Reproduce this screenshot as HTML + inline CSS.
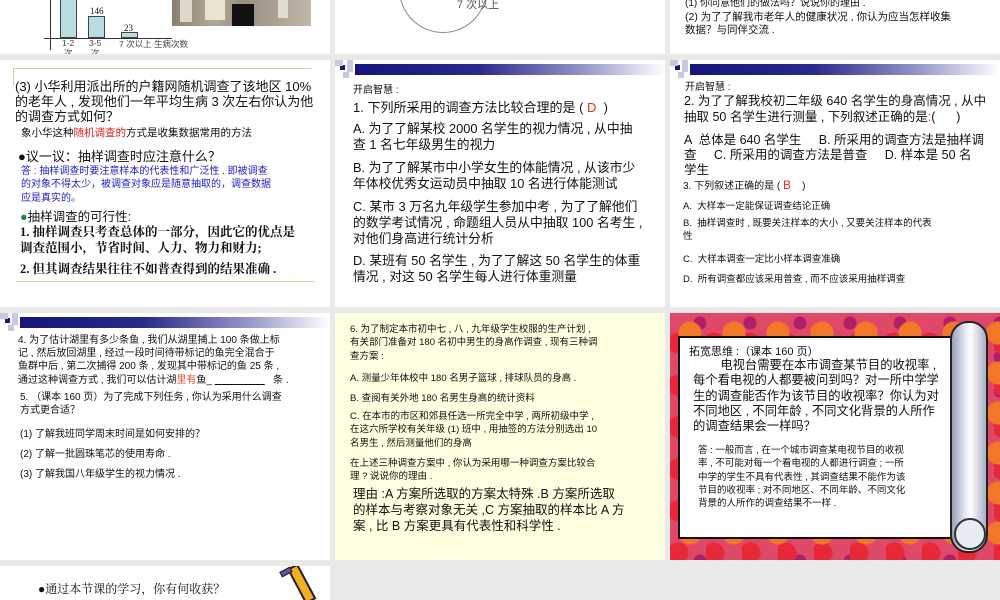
<!DOCTYPE html>
<html><head><meta charset="utf-8"><style>
*{margin:0;padding:0;box-sizing:border-box}
body{width:1000px;height:600px;background:#e9e9e9;position:relative;overflow:hidden;font-family:"Liberation Sans","Noto Sans CJK SC",sans-serif;color:#111}
.s{position:absolute;background:#fff;overflow:hidden}
.t{position:absolute;white-space:nowrap}
.bar{position:absolute;left:20px;right:0;height:11px;background:linear-gradient(90deg,#14147a 0%,#2a2a8a 40%,#9a9acc 75%,#fff 100%)}
.sq{position:absolute;background:#1a1a7a}
.sql{position:absolute;background:#c8c8e4}
.b{font-weight:bold}
</style></head><body>

<!-- top row -->
<div class="s" style="left:0;top:0;width:330px;height:54px">
  <div style="position:absolute;left:50px;top:0;width:1px;height:50px;background:#333"></div>
  <div style="position:absolute;left:44px;top:38px;width:128px;height:1px;background:#333"></div>
  <div style="position:absolute;left:60px;top:0;width:17px;height:38px;background:#b8dde0;border:1px solid #444;border-top:none"></div>
  <div style="position:absolute;left:88px;top:16px;width:17px;height:22px;background:#b8dde0;border:1px solid #444"></div>
  <div style="position:absolute;left:121px;top:32px;width:17px;height:6px;background:#b8dde0;border:1px solid #444"></div>
  <div class="t" style="left:90px;top:6px;font-size:9px;font-family:'Liberation Serif',serif">146</div>
  <div class="t" style="left:124px;top:23px;font-size:9px;font-family:'Liberation Serif',serif">23</div>
  <div class="t" style="left:62px;top:38px;font-size:8.5px;line-height:10px;text-align:center;color:#444">1-2<br>次</div>
  <div class="t" style="left:89px;top:38px;font-size:8.5px;line-height:10px;text-align:center;color:#444">3-5<br>次</div>
  <div class="t" style="left:119px;top:38px;font-size:8.5px;color:#444">7 次以上 生病次数</div>
  <div style="position:absolute;left:172px;top:0;width:139px;height:26px;background:linear-gradient(90deg,#8a8070,#b0a898 30%,#9a9080 50%,#a89e90 70%,#c0b8a8);"></div>
  <div style="position:absolute;left:232px;top:4px;width:22px;height:22px;background:#111"></div>
  <div style="position:absolute;left:205px;top:0;width:20px;height:20px;background:#e8e4d0"></div>
  <div style="position:absolute;left:180px;top:0;width:12px;height:22px;background:#ddd8c8"></div>
  <div style="position:absolute;left:278px;top:0;width:10px;height:18px;background:#e0dcd0"></div>
</div>
<div class="s" style="left:335px;top:0;width:330px;height:54px">
  <div style="position:absolute;left:64px;top:-55px;width:88px;height:88px;border:1px solid #888;border-radius:50%"></div>
  <div class="t" style="left:122px;top:-4px;font-size:11px;color:#555">7 次以上</div>
</div>
<div class="s" style="left:670px;top:0;width:330px;height:54px">
  <div class="t" style="left:15px;top:-6px;font-size:10px">(1) 你同意他们的做法吗？说说你的理由 .</div>
  <div class="t" style="left:15px;top:11px;font-size:10.5px;line-height:13px">(2) 为了了解我市老年人的健康状况 , 你认为应当怎样收集<br>数据？与同伴交流 .</div>
</div>

<!-- row 2 -->
<div class="s" style="left:0;top:60px;width:330px;height:247px">
  <div style="position:absolute;left:13px;top:8px;width:298px;height:1px;background:#d8cc9a"></div>
  <div style="position:absolute;left:13px;top:8px;width:1px;height:18px;background:#d8cc9a"></div>
  <div style="position:absolute;left:16px;top:221px;width:298px;height:1px;background:#d8cc9a"></div>
  <div class="t" style="left:15px;top:19px;font-size:13px;line-height:15px">(3) 小华利用派出所的户籍网随机调查了该地区 10%<br>的老年人 , 发现他们一年平均生病 3 次左右你认为他<br>的调查方式如何？</div>
  <div class="t" style="left:21px;top:65px;font-size:10.5px">象小华这种<span style="color:#e02020">随机调查的</span>方式是收集数据常用的方法</div>
  <div class="t" style="left:18px;top:86px;font-size:13px">●议一议：抽样调查时应注意什么？</div>
  <div class="t" style="left:21px;top:105px;font-size:10px;line-height:13.3px;color:#2020d0">答 : 抽样调查时要注意样本的代表性和广泛性 . 即被调查<br>的对象不得太少，被调查对象应是随意抽取的，调查数据<br>应是真实的。</div>
  <div class="t" style="left:20px;top:146px;font-size:12.5px"><span style="color:#208040">●</span>抽样调查的可行性:</div>
  <div class="t" style="left:20px;top:164px;font-size:12.5px;line-height:16px;font-family:'Liberation Serif','Noto Serif CJK SC',serif;font-weight:bold">1. 抽样调查只考查总体的一部分，因此它的优点是<br>调查范围小，节省时间、人力、物力和财力;</div>
  <div class="t" style="left:20px;top:199px;font-size:12.5px;font-family:'Liberation Serif','Noto Serif CJK SC',serif;font-weight:bold">2. 但其调查结果往往不如普查得到的结果准确 .</div>
</div>
<div class="s" style="left:335px;top:60px;width:330px;height:247px">
  <div class="bar" style="top:4px"></div>
  <div class="sq" style="left:5px;top:5px;width:5px;height:5px"></div>
  <div class="sql" style="left:0;top:0;width:8px;height:6px"></div><div class="sql" style="left:12px;top:0;width:6px;height:12px"></div><div class="sql" style="left:8px;top:12px;width:6px;height:6px"></div>
  <div class="t" style="left:18px;top:21px;font-size:10px">开启智慧 :</div>
  <div class="t" style="left:18px;top:37px;font-size:13px">1. 下列所采用的调查方法比较合理的是 ( <span style="color:#e83010">D</span> &nbsp;)</div>
  <div class="t" style="left:18px;top:61px;font-size:12.8px;line-height:16px">A. 为了了解某校 2000 名学生的视力情况 , 从中抽<br>查 1 名七年级男生的视力</div>
  <div class="t" style="left:18px;top:100px;font-size:12.8px;line-height:16px">B. 为了了解某市中小学女生的体能情况 , 从该市少<br>年体校优秀女运动员中抽取 10 名进行体能测试</div>
  <div class="t" style="left:18px;top:139px;font-size:12.8px;line-height:16px">C. 某市 3 万名九年级学生参加中考 , 为了了解他们<br>的数学考试情况 , 命题组人员从中抽取 100 名考生 ,<br>对他们身高进行统计分析</div>
  <div class="t" style="left:18px;top:193px;font-size:12.8px;line-height:16px">D. 某班有 50 名学生 , 为了了解这 50 名学生的体重<br>情况 , 对这 50 名学生每人进行体重测量</div>
</div>
<div class="s" style="left:670px;top:60px;width:330px;height:247px">
  <div class="bar" style="top:4px"></div>
  <div class="sq" style="left:5px;top:5px;width:5px;height:5px"></div>
  <div class="sql" style="left:0;top:0;width:8px;height:6px"></div><div class="sql" style="left:12px;top:0;width:6px;height:12px"></div><div class="sql" style="left:8px;top:12px;width:6px;height:6px"></div>
  <div class="t" style="left:15px;top:18px;font-size:10px">开启智慧 :</div>
  <div class="t" style="left:14px;top:34px;font-size:12.5px;line-height:15.5px">2. 为了了解我校初二年级 640 名学生的身高情况 , 从中<br>抽取 50 名学生进行测量 , 下列叙述正确的是<span style="color:#e83010">:</span>( &nbsp;&nbsp;&nbsp;&nbsp;&nbsp;)</div>
  <div class="t" style="left:14px;top:73px;font-size:12.5px;line-height:15px">A &nbsp;总体是 640 名学生 &nbsp;&nbsp;&nbsp;&nbsp;B. 所采用的调查方法是抽样调<br>查 &nbsp;&nbsp;&nbsp;&nbsp;C. 所采用的调查方法是普查 &nbsp;&nbsp;&nbsp;&nbsp;D. 样本是 50 名<br>学生</div>
  <div class="t" style="left:13px;top:117px;font-size:10px">3. 下列叙述正确的是 ( <span style="color:#e83010;font-size:12px">B</span> &nbsp;&nbsp;&nbsp;)</div>
  <div class="t" style="left:13px;top:138px;font-size:9.5px">A. &nbsp;大样本一定能保证调查结论正确</div>
  <div class="t" style="left:13px;top:157px;font-size:9.5px;line-height:13px">B. &nbsp;抽样调查时 , 既要关注样本的大小 , 又要关注样本的代表<br>性</div>
  <div class="t" style="left:13px;top:191px;font-size:9.5px">C. &nbsp;大样本调查一定比小样本调查准确</div>
  <div class="t" style="left:13px;top:211px;font-size:9.5px">D. &nbsp;所有调查都应该采用普查 , 而不应该采用抽样调查</div>
</div>

<!-- row 3 -->
<div class="s" style="left:0;top:313px;width:330px;height:247px">
  <div class="bar" style="top:4px"></div>
  <div class="sq" style="left:5px;top:5px;width:5px;height:5px"></div>
  <div class="sql" style="left:0;top:0;width:8px;height:6px"></div><div class="sql" style="left:12px;top:0;width:6px;height:12px"></div><div class="sql" style="left:8px;top:12px;width:6px;height:6px"></div>
  <div class="t" style="left:18px;top:21px;font-size:10px;line-height:13.2px">4. 为了估计湖里有多少条鱼 , 我们从湖里捕上 100 条做上标<br>记 , 然后放回湖里 , 经过一段时间待带标记的鱼完全混合于<br>鱼群中后 , 第二次捕得 200 条 , 发现其中带标记的鱼 25 条 ,<br>通过这种调查方式 , 我们可以估计湖<span style="color:#e05030">里有</span>鱼_ <u>&nbsp;&nbsp;&nbsp;&nbsp;&nbsp;&nbsp;&nbsp;&nbsp;&nbsp;&nbsp;&nbsp;&nbsp;&nbsp;&nbsp;&nbsp;&nbsp;&nbsp;&nbsp;</u> &nbsp;&nbsp;条 .</div>
  <div class="t" style="left:20px;top:78px;font-size:10px;line-height:13.3px">5. （课本 160 页）为了完成下列任务 , 你认为采用什么调查<br>方式更合适？</div>
  <div class="t" style="left:20px;top:112px;font-size:10px">(1) 了解我班同学周末时间是如何安排的？</div>
  <div class="t" style="left:20px;top:132px;font-size:10px">(2) 了解一批圆珠笔芯的使用寿命 .</div>
  <div class="t" style="left:20px;top:152px;font-size:10px">(3) 了解我国八年级学生的视力情况 .</div>
</div>
<div class="s" style="left:335px;top:313px;width:330px;height:247px;background:#fefee0">
  <div class="t" style="left:15px;top:10px;font-size:9.5px;line-height:13.3px">6. 为了制定本市初中七 , 八 , 九年级学生校服的生产计划 ,<br>有关部门准备对 180 名初中男生的身高作调查 , 现有三种调<br>查方案 :</div>
  <div class="t" style="left:15px;top:57px;font-size:9.5px">A. 测量少年体校中 180 名男子篮球 , 排球队员的身高 .</div>
  <div class="t" style="left:15px;top:77px;font-size:9.5px">B. 查阅有关外地 180 名男生身高的统计资料</div>
  <div class="t" style="left:15px;top:97px;font-size:9.5px;line-height:13.3px">C. 在本市的市区和郊县任选一所完全中学 , 两所初级中学 ,<br>在这六所学校有关年级 (1) 班中 , 用抽签的方法分别选出 10<br>名男生 , 然后测量他们的身高</div>
  <div class="t" style="left:15px;top:144px;font-size:9.5px;line-height:13.3px">在上述三种调查方案中 , 你认为采用哪一种调查方案比较合<br>理 ? 说说你的理由 .</div>
  <div class="t" style="left:18px;top:173px;font-size:12.5px;line-height:16px">理由 :A 方案所选取的方案太特殊 .B 方案所选取<br>的样本与考察对象无关 ,C 方案抽取的样本比 A 方<br>案 , 比 B 方案更具有代表性和科学性 .</div>
</div>
<div class="s" style="left:670px;top:313px;width:330px;height:247px;background:
radial-gradient(circle at 20px 20px,#f07828 11px,transparent 12px) 0 0/44px 40px,
radial-gradient(circle at 8px 30px,#e82838 10px,transparent 11px) 0 0/36px 42px,
radial-gradient(circle at 30px 10px,#b02068 6px,transparent 7px) 0 0/50px 34px,
#e04868">
  <div style="position:absolute;left:8px;top:23px;width:282px;height:203px;background:#fff;border:2px solid #111"></div>
  <div style="position:absolute;left:280px;top:8px;width:38px;height:232px;border-radius:18px;background:linear-gradient(90deg,#9aa0b8,#e8ecf4 40%,#fff 55%,#aab0c4);border:2px solid #222"></div>
  <div style="position:absolute;left:284px;top:205px;width:32px;height:32px;border-radius:50%;border:2px solid #333;background:#e8ecf4"></div>
  <div class="t" style="left:19px;top:30px;font-size:11px">拓宽思维 :（课本 160 页）</div>
  <div class="t" style="left:23px;top:45px;font-size:12.3px;line-height:15.3px">&nbsp;&nbsp;&nbsp;&nbsp;&nbsp;&nbsp;&nbsp;&nbsp;电视台需要在本市调查某节目的收视率 ,<br>每个看电视的人都要被问到吗？对一所中学学<br>生的调查能否作为该节目的收视率？你认为对<br>不同地区 , 不同年龄 , 不同文化背景的人所作<br>的调查结果会一样吗？</div>
  <div class="t" style="left:28px;top:131px;font-size:9.5px;line-height:13.3px">答 : 一般而言 , 在一个城市调查某电视节目的收视<br>率 , 不可能对每一个看电视的人都进行调查 ; 一所<br>中学的学生不具有代表性 , 其调查结果不能作为该<br>节目的收视率 ; 对不同地区、不同年龄、不同文化<br>背景的人所作的调查结果不一样 .</div>
</div>

<!-- row 4 -->
<div class="s" style="left:0;top:566px;width:330px;height:34px">
  <div class="t" style="left:38px;top:14px;font-size:12px;font-family:'Liberation Serif','Noto Serif CJK SC',serif">●通过本节课的学习，你有何收获？</div>
  <div style="position:absolute;left:287px;top:3px;width:12px;height:40px;background:#f0b020;border:2px solid #222;transform:rotate(-28deg);transform-origin:top left"></div>
  <div style="position:absolute;left:280px;top:3px;width:12px;height:6px;background:#6050a0;border:1px solid #222;transform:rotate(-28deg)"></div>
</div>
</body></html>
